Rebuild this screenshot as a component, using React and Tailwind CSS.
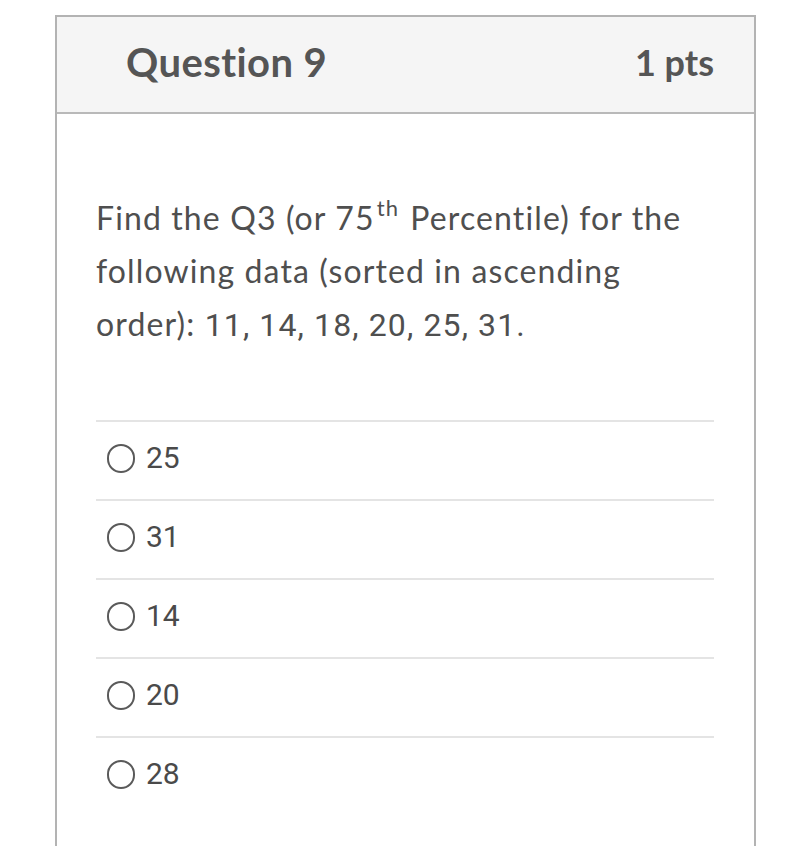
const answers = ['25', '31', '14', '20', '28'];

const Answer = ({ value }) => (
  <label className="flex items-center h-[79px] border-t-2 border-[#e4e4e4] pl-[11px] pb-[5px] cursor-pointer">
    <span className="inline-block w-[28px] h-[29px] rounded-full border-2 border-[#5a5a5a] mr-[11px]" />
    <span className="text-[30px] text-[#4a4a4a] leading-none" style={{ fontFamily: 'Roboto, "Liberation Sans", sans-serif' }}>
      {value}
    </span>
  </label>
);

export default function App() {
  return (
    <div className="min-h-[846px] bg-white pt-[15px] overflow-hidden" style={{ fontFamily: 'Lato, "Open Sans", sans-serif' }}>
      <div className="ml-[55px] w-[701px] h-[860px] border-2 border-b-0 border-[#b3b3b3]">
        <div className="h-[97px] bg-[#f5f5f5] border-b-2 border-[#b9b9b9] flex items-center justify-between pl-[69px] pr-[40px] pb-[5px]">
          <h2 className="text-[40px] font-bold tracking-[0.01em] text-[#555555]">Question 9</h2>
          <span className="text-[36px] font-bold text-[#555555]">1 pts</span>
        </div>

        <div className="pl-[39px] pr-[40px] pt-[77px]">
          <p className="text-[32px] leading-[53px] tracking-[0.035em] text-[#4f4f4f]">
            Find the Q3 (or 75<sup className="text-[22px] relative -top-[14px] ml-[2px] mr-[2px]">th</sup> Percentile) for the following data
            (sorted in ascending order):{' '}
            <span style={{ fontFamily: 'Roboto, "Liberation Sans", sans-serif' }}>11, 14, 18, 20, 25, 31.</span>
          </p>

          <div className="mt-[68px]">
            {answers.map((a) => (
              <Answer key={a} value={a} />
            ))}
          </div>
        </div>
      </div>
    </div>
  );
}
